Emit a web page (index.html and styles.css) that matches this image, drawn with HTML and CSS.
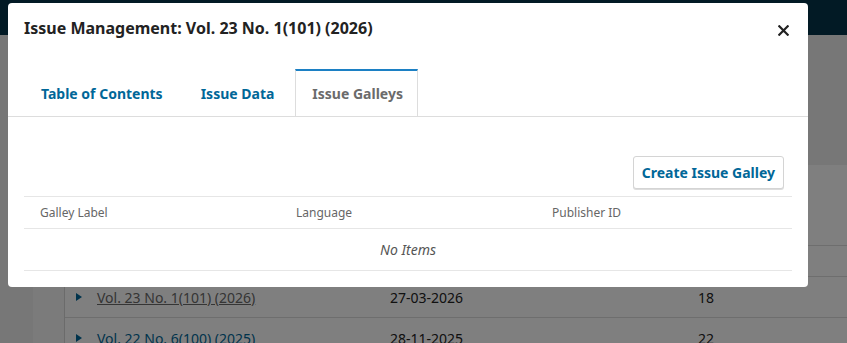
FILE: index.html
```html
<!DOCTYPE html>
<html lang="en">
<head>
<meta charset="utf-8">
<title>Issue Management</title>
<link rel="stylesheet" href="styles.css">
</head>
<body>
<div class="app">
  <header class="topbar"></header>
  <div class="layout">
    <div class="gutter"></div>
    <aside class="sidenav"></aside>
    <main class="main">
      <div class="panel">
        <div class="prow prow-head"></div>
        <div class="prow prow-sub"></div>
        <div class="prow">
          <span class="caret"></span>
          <a class="issue-link visited" href="#">Vol. 23 No. 1(101) (2026)</a>
          <span class="date">27-03-2026</span>
          <span class="count">18</span>
        </div>
        <div class="prow">
          <span class="caret"></span>
          <a class="issue-link" href="#">Vol. 22 No. 6(100) (2025)</a>
          <span class="date">28-11-2025</span>
          <span class="count">22</span>
        </div>
      </div>
    </main>
  </div>
</div>
<div class="overlay"></div>
<div class="modal">
  <div class="modal-header">
    <h2 class="modal-title">Issue Management: Vol. 23 No. 1(101) (2026)</h2>
    <button class="close" aria-label="Close">
      <svg width="11" height="11" viewBox="0 0 11 11"><path d="M1.3 1.3 L9.7 9.7 M9.7 1.3 L1.3 9.7" stroke="#222" stroke-width="2.2" stroke-linecap="square" fill="none"/></svg>
    </button>
  </div>
  <div class="tabs">
    <button class="tab">Table of Contents</button>
    <button class="tab">Issue Data</button>
    <button class="tab active">Issue Galleys</button>
  </div>
  <div class="content">
    <div class="toolbar">
      <button class="btn">Create Issue Galley</button>
    </div>
    <div class="grid">
      <div class="grid-head">
        <div class="col">Galley Label</div>
        <div class="col">Language</div>
        <div class="col">Publisher ID</div>
      </div>
      <div class="grid-empty">No Items</div>
    </div>
  </div>
</div>
</body>
</html>
```

FILE: styles.css
```css
* { box-sizing: border-box; }
html, body { margin: 0; padding: 0; }
body {
  width: 847px;
  height: 343px;
  overflow: hidden;
  background: #eeeeee;
  font-family: "Noto Sans", "Open Sans", sans-serif;
  color: #222;
  position: relative;
}
.app { display: flex; flex-direction: column; height: 343px; }
.topbar { height: 35px; background: #04344b; flex: none; }
.layout { display: flex; flex: 1; }
.gutter { width: 33px; flex: none; }
.sidenav { width: 32px; flex: none; background: #f6f6f6; border-right: 1px solid #d6d6d6; }
.main { flex: 1; padding-top: 130px; }
.panel { background: #fff; }
.prow {
  display: flex;
  align-items: center;
  height: 41px;
  border-bottom: 1px solid #ddd;
  font-size: 14px;
}
.prow-head { height: 81px; }
.prow-sub { height: 31px; }
.caret {
  width: 0; height: 0;
  margin-left: 11px;
  border-left: 6px solid #006798;
  border-top: 4px solid transparent;
  border-bottom: 4px solid transparent;
}
.issue-link {
  margin-left: 15px;
  width: 293px;
  color: #006798;
  text-decoration: none;
}
.issue-link.visited { color: #6a6a6a; text-decoration: underline; }
.date { width: 308px; color: #222; }
.count { color: #222; }

.overlay {
  position: absolute;
  inset: 0;
  background: rgba(0,0,0,0.5);
}
.modal {
  position: absolute;
  left: 8px;
  top: 3px;
  width: 800px;
  height: 284px;
  background: #fff;
  border-radius: 4px;
  display: flex;
  flex-direction: column;
}
.modal-header {
  height: 50px;
  display: flex;
  align-items: center;
  justify-content: space-between;
  padding: 0 19px 0 16px;
}
.modal-title {
  margin: 0;
  font-size: 16px;
  font-weight: 700;
  color: #222;
}
.close {
  border: 0;
  background: none;
  padding: 0;
  width: 11px;
  height: 11px;
  display: flex;
  margin-top: 4px;
}
.tabs {
  margin-top: 16px;
  display: flex;
  gap: 4px;
  padding-left: 16px;
  border-bottom: 1px solid #ddd;
  height: 48px;
}
.tab {
  font-family: inherit;
  font-size: 14px;
  font-weight: 700;
  color: #006798;
  background: none;
  border: 1px solid transparent;
  border-top: 2px solid transparent;
  padding: 0 16px;
  height: 47px;
  cursor: pointer;
}
.tab.active {
  color: #6b6b6b;
  background: #fff;
  border-color: #ddd;
  border-top-color: #1c80c4;
  height: 48px;
  padding-right: 14px;
}
.content { padding: 16px; }
.toolbar {
  display: flex;
  justify-content: flex-end;
  padding: 23px 8px 7px 0;
}
.btn {
  font-family: inherit;
  font-size: 14px;
  font-weight: 700;
  color: #006798;
  background: #fff;
  border: 1px solid #d4d4d4;
  border-radius: 3px;
  box-shadow: 0 1px 0 #ddd;
  height: 33px;
  padding: 0 8px;
}
.grid { border-top: 1px solid #e6e6e6; }
.grid-head {
  display: grid;
  grid-template-columns: repeat(3, 1fr);
  height: 32px;
  align-items: center;
  border-bottom: 1px solid #e6e6e6;
}
.col {
  padding-left: 16px;
  font-size: 12px;
  color: #666;
}
.grid-empty {
  height: 42px;
  display: flex;
  align-items: center;
  justify-content: center;
  font-size: 14px;
  font-style: italic;
  color: #555;
  border-bottom: 1px solid #e6e6e6;
}
```
